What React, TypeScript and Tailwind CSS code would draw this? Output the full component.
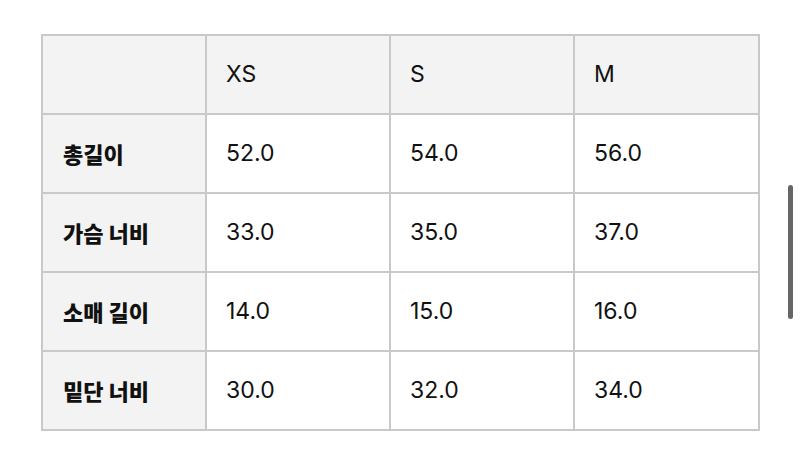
const sizes = ["XS", "S", "M"];

const rows = [
  { label: "총길이", values: ["52.0", "54.0", "56.0"] },
  { label: "가슴 너비", values: ["33.0", "35.0", "37.0"] },
  { label: "소매 길이", values: ["14.0", "15.0", "16.0"] },
  { label: "밑단 너비", values: ["30.0", "32.0", "34.0"] },
];

export default function App() {
  return (
    <div
      className="relative h-[463px] w-[800px] overflow-hidden bg-white pl-[41px] pt-[34px] text-[#111]"
      style={{ fontFamily: 'Inter, "Noto Sans CJK KR", sans-serif' }}
    >
      <table className="w-[717px] table-fixed border-collapse border-2 border-[#c9c9c9]">
        <colgroup>
          <col className="w-[164px]" />
          <col className="w-[184px]" />
          <col className="w-[184px]" />
          <col className="w-[185px]" />
        </colgroup>
        <thead>
          <tr className="h-[79px] bg-[#f3f3f3]">
            <th className="border-2 border-[#c9c9c9]" />
            {sizes.map((s) => (
              <th
                key={s}
                className="border-2 border-[#c9c9c9] pl-[19px] text-left text-[23px] font-normal"
              >
                {s}
              </th>
            ))}
          </tr>
        </thead>
        <tbody>
          {rows.map((row) => (
            <tr key={row.label} className="h-[79px]">
              <th
                className="border-2 border-[#c9c9c9] bg-[#f3f3f3] pl-[20px] text-left text-[22px] font-black"
                style={{ fontFamily: '"Noto Sans CJK KR", sans-serif' }}
              >
                {row.label}
              </th>
              {row.values.map((v) => (
                <td
                  key={v}
                  className="border-2 border-[#c9c9c9] pl-[19px] text-[23px]"
                >
                  {v}
                </td>
              ))}
            </tr>
          ))}
        </tbody>
      </table>
      <div className="absolute left-[788px] top-[185px] h-[134px] w-[5px] rounded-full bg-[#666]" />
    </div>
  );
}
